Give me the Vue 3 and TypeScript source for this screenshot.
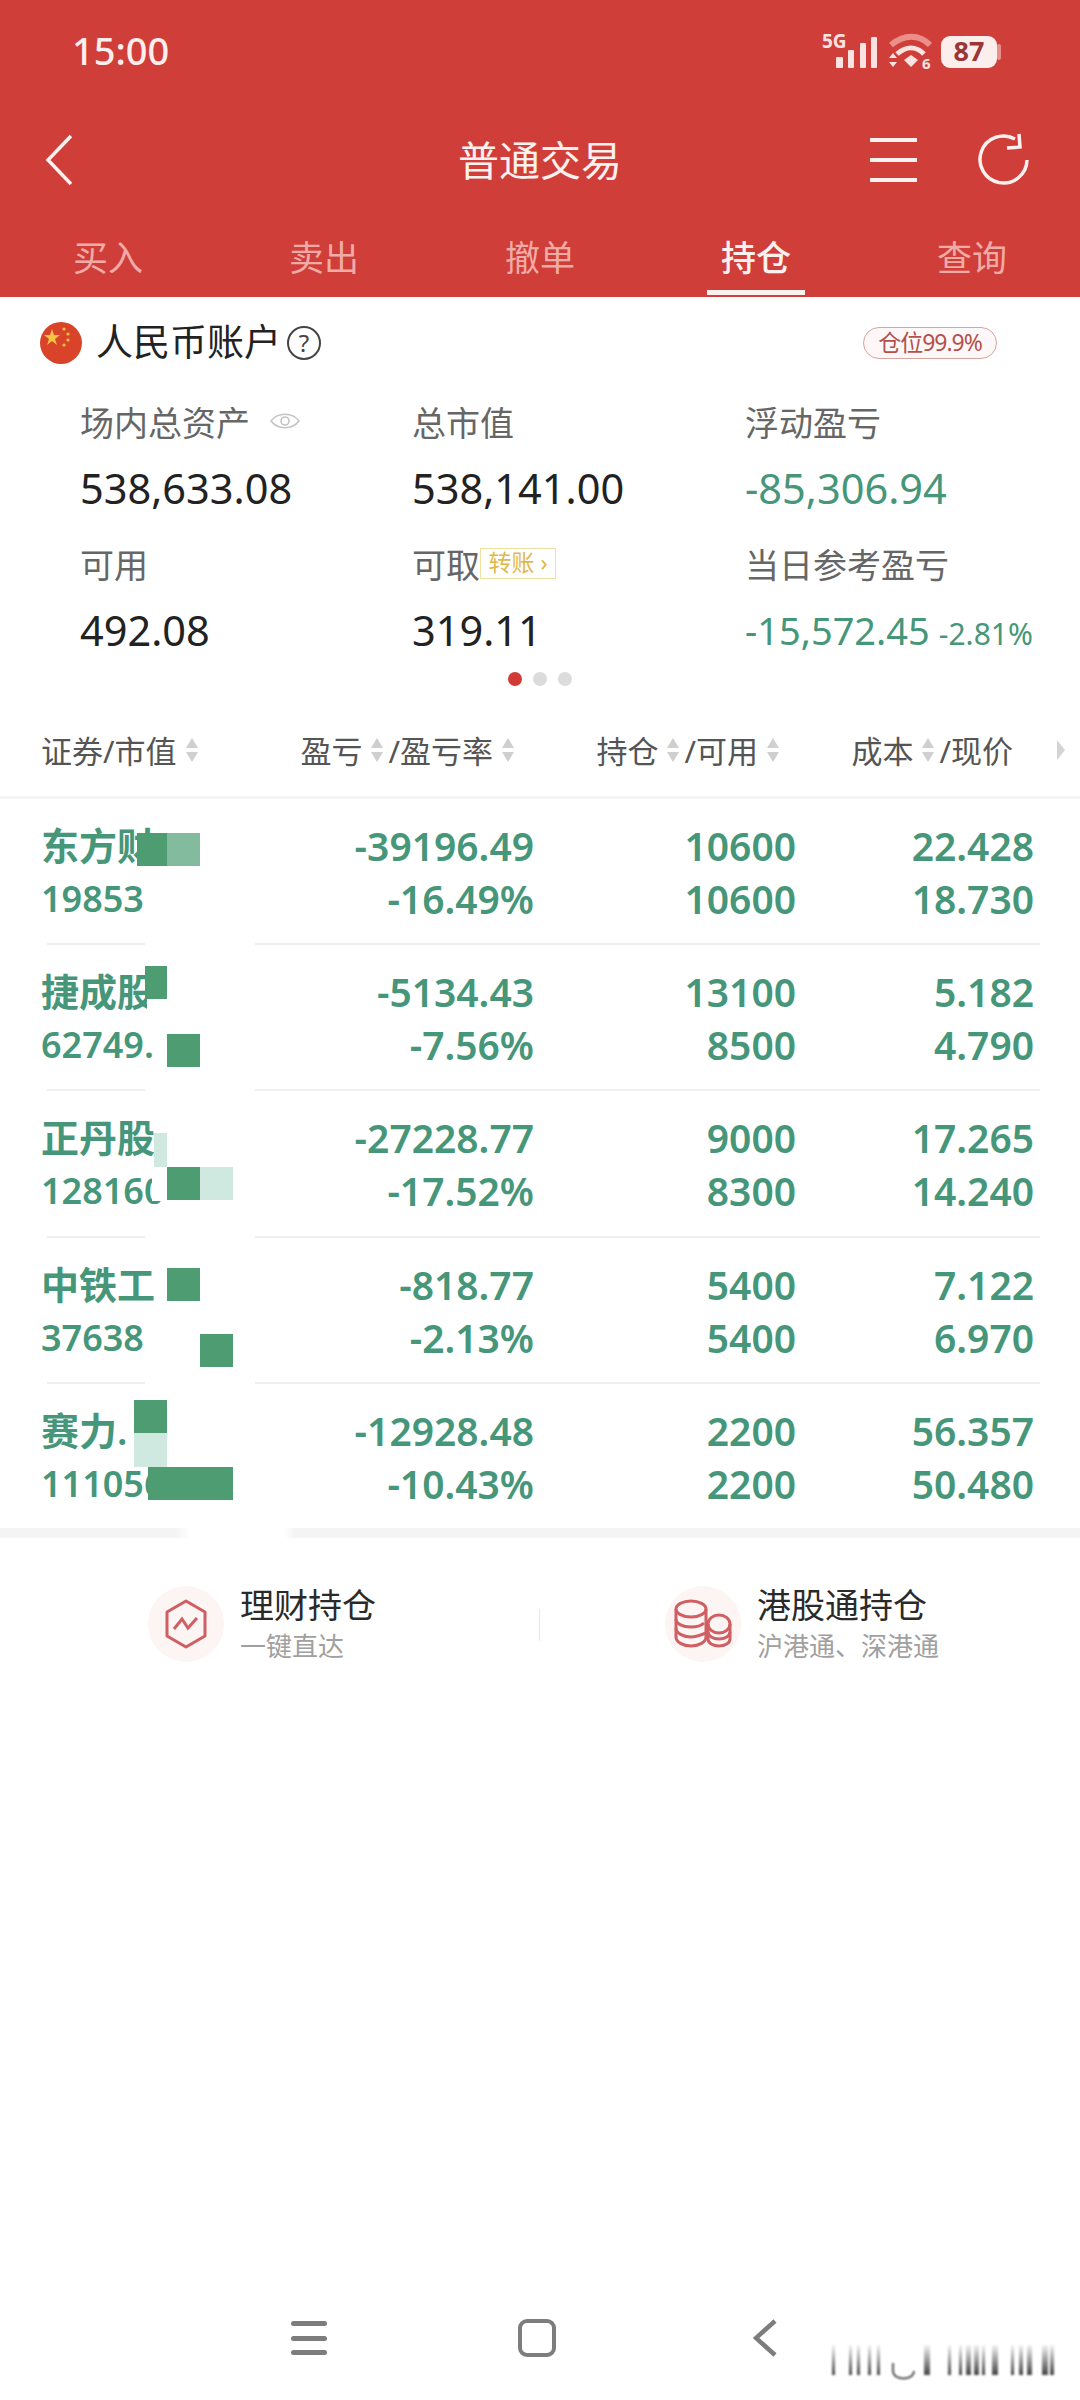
<template>
  <div class="page">
    <header class="top">
      <div class="status">
        <span class="time">15:00</span>
        <svg class="status-icons" width="190" height="44" viewBox="0 0 190 44">
          <text x="2" y="20" class="five-g">5G</text>
          <g fill="#fbe3e1">
            <rect x="16" y="29" width="7" height="11" rx="1" />
            <rect x="28" y="22" width="6" height="18" rx="1" />
            <rect x="40" y="15" width="6" height="25" rx="1" />
            <rect x="51" y="9" width="6" height="31" rx="1" />
          </g>
          <g fill="none" stroke-linecap="butt">
            <path d="M71 17 C 84 6 99 6 110 17" stroke="#ea8f8a" stroke-width="6" />
            <path d="M77 26 C 86 18 96 18 104 26" stroke="#fbe3e1" stroke-width="5" />
          </g>
          <path d="M84 32 L91 27 L98 32 L91 39 Z" fill="#fbe3e1" />
          <path d="M69 30 L73 25 L77 30 Z M69 34 L77 34 L73 39 Z" fill="#fbe3e1" />
          <text x="102" y="41" class="wifi-six">6</text>
          <rect x="121" y="8" width="56" height="32" rx="9" fill="#fbeeed" />
          <rect x="177" y="16" width="4" height="16" rx="2" fill="#ea8f8a" />
          <text x="149" y="33" class="batt">87</text>
        </svg>
      </div>

      <div class="nav-bar">
        <svg class="back" width="28" height="52" viewBox="0 0 28 52">
          <path d="M26 2 L3 26 L26 50" fill="none" stroke="#fdf1f0" stroke-width="3.5" />
        </svg>
        <h1 class="title">普通交易</h1>
        <div class="menu-icon"><i></i><i></i><i></i></div>
        <svg class="refresh" width="54" height="54" viewBox="0 0 54 54">
          <path d="M49 27 A23.5 23.5 0 1 1 37 6" fill="none" stroke="#fdf1f0" stroke-width="3.5" />
          <path d="M41 1 L42 14 L29 15" fill="none" stroke="#fdf1f0" stroke-width="3.5" />
        </svg>
      </div>

      <nav class="tabs">
        <div v-for="t in tabs" :key="t" class="tab" :class="{ active: t === '持仓' }">{{ t }}</div>
      </nav>
    </header>

    <div class="account">
      <svg class="flag" width="42" height="42" viewBox="0 0 42 42">
        <circle cx="21" cy="21" r="21" fill="#d8432a" />
        <path d="M12 7 L14 13 L20 13 L15 17 L17 23 L12 19 L7 23 L9 17 L4 13 L10 13 Z" fill="#f5c344" />
        <circle cx="24" cy="7" r="1.6" fill="#f5c344" />
        <circle cx="28" cy="12" r="1.6" fill="#f5c344" />
        <circle cx="28" cy="18" r="1.6" fill="#f5c344" />
        <circle cx="24" cy="23" r="1.6" fill="#f5c344" />
      </svg>
      <span class="account-name">人民币账户</span>
      <span class="help">?</span>
      <span class="badge">仓位99.9%</span>
    </div>

    <section class="stats">
      <div v-for="s in stats" :key="s.label" class="stat">
        <div class="stat-label">
          {{ s.label }}
          <svg v-if="s.eye" class="eye" width="30" height="20" viewBox="0 0 30 20">
            <path d="M1 10 C 8 1 22 1 29 10 C 22 19 8 19 1 10 Z" fill="none" stroke="#c4c4c4" stroke-width="1.6" />
            <circle cx="15" cy="10" r="4" fill="none" stroke="#c4c4c4" stroke-width="1.6" />
          </svg>
          <span v-if="s.tag" class="transfer">转账 ›</span>
        </div>
        <div class="stat-value" :class="{ down: s.down, tight: s.extra }">
          {{ s.value }}<small v-if="s.extra">{{ s.extra }}</small>
        </div>
      </div>
    </section>

    <div class="dots"><i class="on"></i><i></i><i></i></div>

    <div class="thead">
      <div v-for="(h, i) in heads" :key="i" class="th" :class="'th' + i">
        <template v-for="p in h" :key="p">
          <span>{{ p }}</span>
          <svg class="sort" width="14" height="28" viewBox="0 0 14 28">
            <path d="M7 2 L13 12 L1 12 Z M1 16 L13 16 L7 26 Z" fill="#cfcfcf" />
          </svg>
        </template>
      </div>
      <svg class="more" width="10" height="22" viewBox="0 0 10 22">
        <path d="M1 1 L9 11 L1 21 Z" fill="#d4d4d4" />
      </svg>
    </div>

    <section class="rows">
      <div v-for="r in rows" :key="r.value" class="row">
        <div class="cell left">
          <div class="name">{{ r.name }}</div>
          <div class="worth">{{ r.value }}</div>
        </div>
        <div class="cell"><div>{{ r.pl }}</div><div>{{ r.rate }}</div></div>
        <div class="cell"><div>{{ r.hold }}</div><div>{{ r.avail }}</div></div>
        <div class="cell"><div>{{ r.cost }}</div><div>{{ r.price }}</div></div>
        <i
          v-for="(b, i) in r.blocks"
          :key="i"
          class="block"
          :style="{ left: b[0] + 'px', top: b[1] + 'px', width: b[2] + 'px', height: b[3] + 'px', background: b[4] }"
        ></i>
      </div>
    </section>

    <div class="links">
      <div class="link">
        <span class="link-icon">
          <svg width="44" height="50" viewBox="0 0 44 50">
            <path d="M22 2 L41 13 L41 37 L22 48 L3 37 L3 13 Z" fill="none" stroke="#cf5f62" stroke-width="3" stroke-linejoin="round" />
            <path d="M10 30 L18 20 L24 29 L33 19" fill="none" stroke="#cf5f62" stroke-width="3" />
          </svg>
        </span>
        <div>
          <div class="link-title">理财持仓</div>
          <div class="link-sub">一键直达</div>
        </div>
      </div>
      <div class="link">
        <span class="link-icon">
          <svg width="58" height="50" viewBox="0 0 58 50">
            <g fill="none" stroke="#cf5f62" stroke-width="3">
              <ellipse cx="17" cy="10" rx="15" ry="8" />
              <path d="M2 10 V38 C2 43 9 47 17 47 C25 47 32 43 32 38 V10" />
              <path d="M2 20 C2 25 9 28 17 28 C22 28 27 27 30 24" />
              <path d="M2 29 C2 34 9 38 17 38 C22 38 27 36 32 34" />
              <ellipse cx="45" cy="25" rx="11" ry="9" fill="#fdf4f4" />
              <path d="M34 25 V40 C34 44 39 47 45 47 C51 47 56 44 56 40 V25" />
              <path d="M34 33 C34 37 39 40 45 40 C51 40 56 37 56 33" />
            </g>
          </svg>
        </span>
        <div>
          <div class="link-title">港股通持仓</div>
          <div class="link-sub">沪港通、深港通</div>
        </div>
      </div>
      <i class="link-split"></i>
    </div>

    <div class="spacer"></div>

    <footer class="sys-nav">
      <div class="sys-menu"><i></i><i></i><i></i></div>
      <div class="sys-home"></div>
      <svg width="24" height="38" viewBox="0 0 24 38">
        <path d="M22 2 L3 19 L22 36" fill="none" stroke="#7d7d7d" stroke-width="4.5" />
      </svg>
      <svg class="mark" width="224" height="36" viewBox="0 0 224 36">
        <defs>
          <linearGradient id="fade" x1="0" y1="0" x2="0" y2="1">
            <stop offset="0" stop-color="#222" stop-opacity="0.05" />
            <stop offset="1" stop-color="#222" stop-opacity="0.85" />
          </linearGradient>
        </defs>
        <rect v-for="m in marks" :key="m[0]" :x="m[0]" y="0" :width="m[1]" height="30" fill="url(#fade)" />
        <path d="M61 18 V26 C61 36 82 36 82 26" fill="none" stroke="#222" stroke-width="1.5" />
      </svg>
    </footer>
  </div>
</template>

<script setup lang="ts">
type Block = [number, number, number, number, string];

const DARK = "#4d9c72";
const SOFT = "#82bb9d";
const PALE = "#cfe9e0";

const tabs = ["买入", "卖出", "撤单", "持仓", "查询"];

const stats = [
  { label: "场内总资产", value: "538,633.08", eye: true },
  { label: "总市值", value: "538,141.00" },
  { label: "浮动盈亏", value: "-85,306.94", down: true },
  { label: "可用", value: "492.08" },
  { label: "可取", value: "319.11", tag: true },
  { label: "当日参考盈亏", value: "-15,572.45", extra: "-2.81%", down: true },
];

const heads = [["证券/市值"], ["盈亏", "/盈亏率"], ["持仓", "/可用"], ["成本", "/现价"]];

const rows: {
  name: string;
  value: string;
  pl: string;
  rate: string;
  hold: string;
  avail: string;
  cost: string;
  price: string;
  blocks: Block[];
}[] = [
  {
    name: "东方财",
    value: "19853",
    pl: "-39196.49",
    rate: "-16.49%",
    hold: "10600",
    avail: "10600",
    cost: "22.428",
    price: "18.730",
    blocks: [
      [137, 34, 30, 33, DARK],
      [167, 34, 33, 33, SOFT],
    ],
  },
  {
    name: "捷成股",
    value: "62749.",
    pl: "-5134.43",
    rate: "-7.56%",
    hold: "13100",
    avail: "8500",
    cost: "5.182",
    price: "4.790",
    blocks: [
      [147, 53, 24, 16, "#fff"],
      [145, 21, 22, 33, DARK],
      [167, 89, 33, 33, DARK],
    ],
  },
  {
    name: "正丹股",
    value: "128160",
    pl: "-27228.77",
    rate: "-17.52%",
    hold: "9000",
    avail: "8300",
    cost: "17.265",
    price: "14.240",
    blocks: [
      [152, 76, 15, 34, "#fff"],
      [154, 42, 13, 34, PALE],
      [167, 76, 33, 33, DARK],
      [200, 76, 33, 33, PALE],
    ],
  },
  {
    name: "中铁工",
    value: "37638",
    pl: "-818.77",
    rate: "-2.13%",
    hold: "5400",
    avail: "5400",
    cost: "7.122",
    price: "6.970",
    blocks: [
      [167, 30, 33, 33, DARK],
      [200, 96, 33, 33, DARK],
    ],
  },
  {
    name: "赛力.",
    value: "111056",
    pl: "-12928.48",
    rate: "-10.43%",
    hold: "2200",
    avail: "2200",
    cost: "56.357",
    price: "50.480",
    blocks: [
      [134, 16, 33, 33, DARK],
      [134, 49, 33, 34, PALE],
      [148, 83, 85, 33, DARK],
    ],
  },
];

const marks: [number, number][] = [
  [0, 3], [17, 3], [25, 3], [36, 3], [45, 3], [92, 6], [116, 3], [127, 3], [134, 5],
  [142, 5], [150, 3], [160, 6], [179, 3], [187, 4], [195, 5], [210, 6], [218, 4],
];
</script>

<style>
html,
body {
  background: #fff;
}
</style>

<style scoped>
.page {
  width: 1080px;
  min-height: 2400px;
  display: flex;
  flex-direction: column;
  background: #fff;
  color: #222;
  font-family: "Noto Sans", "Noto Sans CJK SC", sans-serif;
}

.top {
  height: 297px;
  background: #d03e39;
  color: #fff;
}
.status {
  height: 100px;
  display: flex;
  align-items: center;
  justify-content: space-between;
  padding: 0 70px 0 72px;
}
.time {
  font-size: 38px;
  font-weight: 500;
  color: #fbeeed;
}
.five-g {
  font: 700 19px "Noto Sans", sans-serif;
  fill: #fbe3e1;
}
.wifi-six {
  font: 700 15px "Noto Sans", sans-serif;
  fill: #fbe3e1;
}
.batt {
  font: 700 27px "Noto Sans", sans-serif;
  fill: #9c3634;
  text-anchor: middle;
}

.nav-bar {
  height: 120px;
  position: relative;
  display: flex;
  align-items: center;
  padding: 0 48px 0 45px;
}
.title {
  position: absolute;
  left: 0;
  right: 0;
  margin: 0;
  text-align: center;
  font-size: 41px;
  font-weight: 400;
  line-height: 116px;
  color: #fdf1f0;
}
.menu-icon {
  margin-left: auto;
  margin-right: 61px;
  width: 47px;
  height: 44px;
  display: flex;
  flex-direction: column;
  justify-content: space-between;
}
.menu-icon i {
  height: 4px;
  background: #fdf1f0;
}

.tabs {
  display: grid;
  grid-template-columns: repeat(5, 216px);
  height: 77px;
}
.tab {
  position: relative;
  text-align: center;
  font-size: 35px;
  line-height: 76px;
  color: #f0aba7;
}
.tab.active {
  color: #fdf1f0;
  font-weight: 500;
}
.tab.active::after {
  content: "";
  position: absolute;
  left: 59px;
  bottom: 2px;
  width: 98px;
  height: 5px;
  background: #fdf1f0;
}

.account {
  height: 60px;
  margin-top: 16px;
  display: flex;
  align-items: center;
  padding: 0 83px 0 40px;
}
.account-name {
  margin-left: 14px;
  font-size: 37px;
  padding-bottom: 6px;
}
.help {
  width: 34px;
  height: 34px;
  margin-left: 6px;
  border: 2px solid #444;
  border-radius: 50%;
  box-sizing: border-box;
  text-align: center;
  font-size: 24px;
  line-height: 29px;
  color: #444;
}
.badge {
  margin-left: auto;
  width: 134px;
  height: 32px;
  box-sizing: border-box;
  border: 1.5px solid #d9a3a0;
  border-radius: 16px;
  text-align: center;
  font-size: 23px;
  line-height: 28px;
  letter-spacing: -1px;
  color: #b4504c;
  background: #fdf8f7;
}

.stats {
  display: grid;
  grid-template-columns: 332px 333px 1fr;
  padding-left: 80px;
  margin-top: 26px;
}
.stat {
  height: 142px;
}
.stat-label {
  display: flex;
  align-items: center;
  height: 44px;
  font-size: 34px;
  color: #666;
}
.eye {
  margin-left: 20px;
}
.transfer {
  width: 76px;
  height: 31px;
  box-sizing: border-box;
  border: 1.5px solid #efe19f;
  text-align: center;
  font-size: 23px;
  line-height: 27px;
  color: #e1b94a;
}
.stat-value {
  margin-top: 21px;
  font-size: 41.5px;
  line-height: 48px;
  color: #222;
  white-space: nowrap;
}
.stat-value.down {
  color: #46967a;
}
.stat-value.tight {
  font-size: 38px;
}
.stat-value small {
  margin-left: 9px;
  font-size: 30px;
}

.dots {
  height: 14px;
  margin-top: -11px;
  display: flex;
  justify-content: center;
  gap: 11px;
}
.dots i {
  width: 14px;
  height: 14px;
  border-radius: 50%;
  background: #dcdcdc;
}
.dots i.on {
  background: #d23a36;
}

.thead {
  position: relative;
  margin-top: 29px;
  height: 84px;
  padding-bottom: 12px;
  display: grid;
  grid-template-columns: 239px 253px 262px 238px;
  padding-left: 41px;
  align-items: center;
  font-size: 31px;
  color: #555;
  border-bottom: 3px solid #f5f5f5;
  box-sizing: border-box;
}
.th {
  display: flex;
  align-items: center;
  justify-content: flex-end;
  white-space: nowrap;
}
.th0 {
  justify-content: flex-start;
}
.th1 {
  padding-right: 14px;
}
.th2 {
  padding-right: 11px;
}
.th3 {
  padding-right: 20px;
}
.th3 .sort:last-child {
  display: none;
}
.sort {
  margin: 0 4px 0 8px;
}
.more {
  position: absolute;
  left: 1056px;
  top: 24px;
}

.rows {
  display: flex;
  flex-direction: column;
  padding-bottom: 8px;
  background: linear-gradient(
      to right,
      #f4f4f4 176px,
      #fff 190px,
      #fff 285px,
      #f4f4f4 295px
    )
    bottom / 100% 10px no-repeat;
}
.row {
  position: relative;
  height: 146.2px;
  box-sizing: border-box;
  padding-left: 41px;
  display: grid;
  grid-template-columns: 240px 253px 262px 238px;
  align-items: center;
  /* the line is broken where the name column was blanked out */
  background: linear-gradient(
      to right,
      transparent 47px,
      #f0f0f0 47px,
      #f0f0f0 145px,
      transparent 145px,
      transparent 255px,
      #f0f0f0 255px,
      #f0f0f0 1040px,
      transparent 1040px
    )
    bottom / 100% 2px no-repeat;
}
.row:last-child {
  background: none;
}
.cell {
  text-align: right;
  font-size: 39px;
  font-weight: 600;
  line-height: 53px;
  color: #46967a;
  white-space: nowrap;
}
.cell.left {
  text-align: left;
  overflow: hidden;
}
.name {
  font-size: 38px;
}
.worth {
  font-size: 36px;
}
.block {
  position: absolute;
}

.links {
  position: relative;
  margin-top: 41px;
  height: 90px;
  display: flex;
}
.link {
  flex: none;
  width: 517px;
  padding-left: 148px;
  box-sizing: border-box;
  display: flex;
  align-items: center;
  gap: 16px;
}
.link-icon {
  width: 76px;
  height: 76px;
  border-radius: 50%;
  background: #fdf4f4;
  display: flex;
  align-items: center;
  justify-content: center;
}
.link-title {
  font-size: 34px;
  line-height: 44px;
  color: #2a2a2a;
}
.link-sub {
  font-size: 26px;
  line-height: 38px;
  color: #a0a0a0;
}
.link-split {
  position: absolute;
  left: 539px;
  top: 30px;
  width: 1px;
  height: 32px;
  background: #e8e8e8;
}

.spacer {
  flex: 1;
}

.sys-nav {
  position: relative;
  height: 124px;
  display: grid;
  grid-template-columns: repeat(3, 228px);
  padding-left: 195px;
  align-items: center;
  justify-items: center;
}
.sys-menu {
  width: 36px;
  height: 34px;
  display: flex;
  flex-direction: column;
  justify-content: space-between;
}
.sys-menu i {
  height: 5px;
  border-radius: 3px;
  background: #7d7d7d;
}
.sys-home {
  width: 38px;
  height: 38px;
  box-sizing: border-box;
  border: 4.5px solid #7d7d7d;
  border-radius: 9px;
}
.mark {
  position: absolute;
  left: 832px;
  top: 69px;
  filter: blur(0.8px);
}
</style>
